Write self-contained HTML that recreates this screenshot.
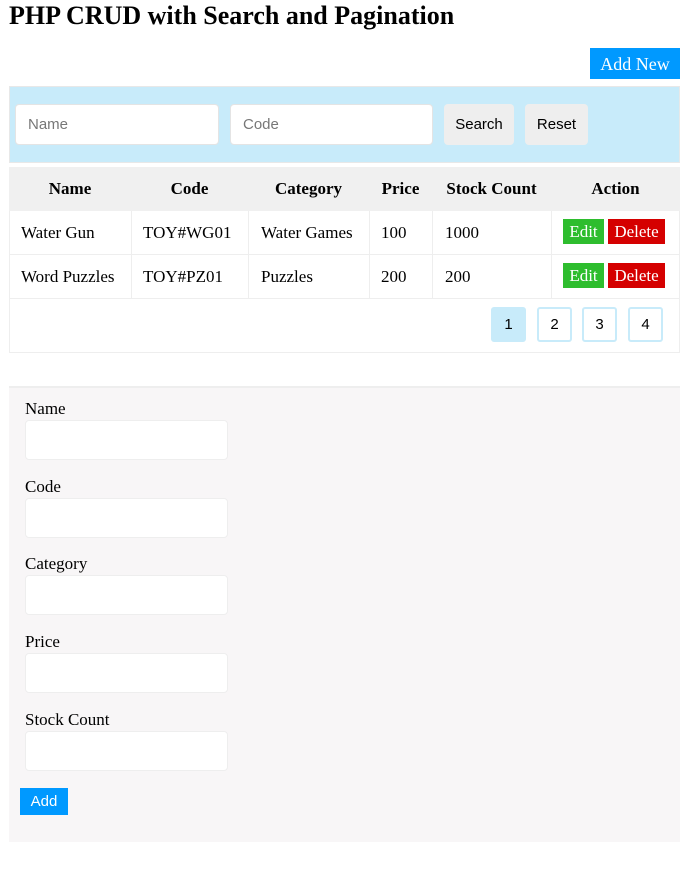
<!DOCTYPE html>
<html><head><meta charset="utf-8"><style>
*{box-sizing:border-box;margin:0;padding:0}
body{width:700px;height:882px;background:#fff;position:relative;font-family:"Liberation Serif",serif;color:#000;overflow:hidden}
.a{position:absolute}
h1{position:absolute;left:9px;top:1px;font-size:26px;font-weight:bold;white-space:nowrap}
.addnew{left:590px;top:48px;width:90px;height:31px;background:#0099ff;color:#fff;font-size:18px;text-align:center;line-height:32px}
.search{left:9px;top:86px;width:671px;height:77px;background:#c8ebfa;border:1px solid #e8e8e8}
.inp{background:#fff;border:1px solid #e4e4e4;border-radius:4px;font-family:"Liberation Sans",sans-serif;font-size:15px;color:#777;padding-left:12px;line-height:40px}
.btn{background:#eee;border-radius:4px;font-family:"Liberation Sans",sans-serif;font-size:15px;text-align:center;line-height:42px}
.tbl{left:9px;top:167px;width:671px;height:186px;border:1px solid #eee}
.hdr{left:9px;top:167px;width:671px;height:44px;background:#f0f0f0}
.th{font-weight:bold;font-size:17px;top:179px;text-align:center}
.td{font-size:17px;white-space:nowrap}
.hl{left:9px;width:671px;height:1px;background:#eee}
.vl{width:1px;background:#eee;top:211px;height:88px}
.edit{background:#2ebd2e;color:#fff;font-size:17px;text-align:center;line-height:25px;width:41px;height:25px}
.del{background:#d50000;color:#fff;font-size:17px;text-align:center;line-height:25px;width:57px;height:25px}
.pg{width:35px;height:35px;border:2px solid #c8ebfa;border-radius:3px;font-family:"Liberation Sans",sans-serif;font-size:15px;text-align:center;line-height:32px;top:307px}
.form{left:9px;top:386px;width:671px;height:456px;background:#f8f6f7;border-top:2px solid #eee}
.lbl{left:25px;font-size:17px}
.fi{left:25px;width:203px;height:40px;background:#fff;border:1px solid #eee;border-radius:4px}
</style></head><body>
<h1>PHP CRUD with Search and Pagination</h1>
<div class="a addnew">Add New</div>
<div class="a search"></div>
<div class="a inp" style="left:15px;top:104px;width:204px;height:41px">Name</div>
<div class="a inp" style="left:230px;top:104px;width:203px;height:41px">Code</div>
<div class="a btn" style="left:444px;top:104px;width:70px;height:41px">Search</div>
<div class="a btn" style="left:525px;top:104px;width:63px;height:41px">Reset</div>

<div class="a tbl"></div>
<div class="a hdr"></div>
<div class="a th" style="left:9px;width:122px">Name</div>
<div class="a th" style="left:131px;width:117px">Code</div>
<div class="a th" style="left:248px;width:121px">Category</div>
<div class="a th" style="left:369px;width:63px">Price</div>
<div class="a th" style="left:432px;width:119px">Stock Count</div>
<div class="a th" style="left:551px;width:129px">Action</div>
<div class="a hl" style="top:254px"></div>
<div class="a hl" style="top:298px"></div>
<div class="a vl" style="left:131px"></div>
<div class="a vl" style="left:248px"></div>
<div class="a vl" style="left:369px"></div>
<div class="a vl" style="left:432px"></div>
<div class="a vl" style="left:551px"></div>

<div class="a td" style="left:21px;top:223px">Water Gun</div>
<div class="a td" style="left:143px;top:223px">TOY#WG01</div>
<div class="a td" style="left:261px;top:223px">Water Games</div>
<div class="a td" style="left:381px;top:223px">100</div>
<div class="a td" style="left:445px;top:223px">1000</div>
<div class="a edit" style="left:563px;top:219px">Edit</div>
<div class="a del" style="left:608px;top:219px">Delete</div>

<div class="a td" style="left:21px;top:267px">Word Puzzles</div>
<div class="a td" style="left:143px;top:267px">TOY#PZ01</div>
<div class="a td" style="left:261px;top:267px">Puzzles</div>
<div class="a td" style="left:381px;top:267px">200</div>
<div class="a td" style="left:445px;top:267px">200</div>
<div class="a edit" style="left:563px;top:263px">Edit</div>
<div class="a del" style="left:608px;top:263px">Delete</div>

<div class="a pg" style="left:491px;background:#c8ebfa">1</div>
<div class="a pg" style="left:537px">2</div>
<div class="a pg" style="left:582px">3</div>
<div class="a pg" style="left:628px">4</div>

<div class="a form"></div>
<div class="a lbl" style="top:399px">Name</div>
<div class="a fi" style="top:420px"></div>
<div class="a lbl" style="top:477px">Code</div>
<div class="a fi" style="top:498px"></div>
<div class="a lbl" style="top:554px">Category</div>
<div class="a fi" style="top:575px"></div>
<div class="a lbl" style="top:632px">Price</div>
<div class="a fi" style="top:653px"></div>
<div class="a lbl" style="top:710px">Stock Count</div>
<div class="a fi" style="top:731px"></div>
<div class="a" style="left:20px;top:788px;width:48px;height:27px;background:#0099ff;color:#fff;font-family:'Liberation Sans',sans-serif;font-size:15px;text-align:center;line-height:27px">Add</div>
</body></html>
